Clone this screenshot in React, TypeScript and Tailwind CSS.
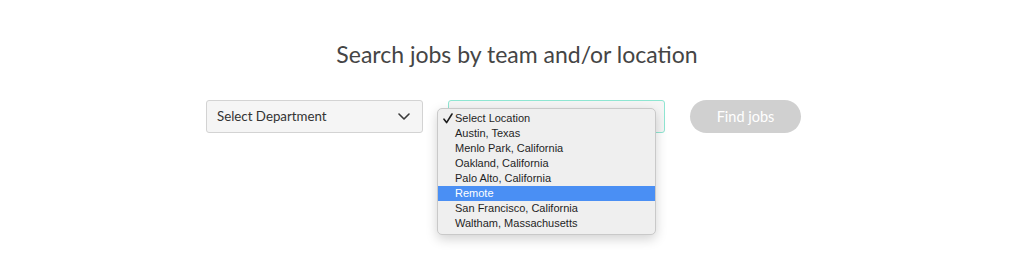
import { FC } from 'react';

const locations = [
    'Select Location',
    'Austin, Texas',
    'Menlo Park, California',
    'Oakland, California',
    'Palo Alto, California',
    'Remote',
    'San Francisco, California',
    'Waltham, Massachusetts',
];

const Chevron: FC = () => (
    <svg width="12" height="7" viewBox="0 0 12 7" fill="none" className="shrink-0">
        <polyline points="1,1 6,6 11,1" stroke="#3a3a3a" strokeWidth="1.6" strokeLinecap="round" strokeLinejoin="round" />
    </svg>
);

const Check: FC = () => (
    <svg width="10" height="11" viewBox="0 0 10 11" fill="none" className="absolute left-[5px] top-[2px]">
        <path d="M1 6.2 L3.6 9.6 L9 1" stroke="#1c1c1c" strokeWidth="1.6" strokeLinecap="round" strokeLinejoin="round" />
    </svg>
);

const LocationMenu: FC<{ highlighted: string }> = ({ highlighted }) => (
    <ul className="absolute left-[-11px] top-[8px] w-[219px] py-[2px] pb-[3px] rounded-[5px] border border-[#c9c9c9] bg-[#efefef] shadow-[0_4px_12px_rgba(0,0,0,0.18)] font-['Liberation_Sans',sans-serif] text-[11px] text-[#1f1f1f]">
        {locations.map((loc, i) => (
            <li
                key={loc}
                className={
                    loc === highlighted
                        ? 'relative h-[15px] leading-[15px] pl-[17px] bg-[#4a8ff4] text-white'
                        : 'relative h-[15px] leading-[15px] pl-[17px]'
                }
            >
                {i === 0 && <Check />}
                {loc}
            </li>
        ))}
    </ul>
);

export default function App() {
    return (
        <div className="w-[1024px] h-[253px] bg-white font-['Lato',sans-serif]">
            <h1 className="pt-[40px] pl-[10px] text-center text-[23px] leading-[28px] text-[#454545]">
                Search jobs by team and/or location
            </h1>

            <div className="mt-[32px] flex justify-center gap-[25px] pr-[17px]">
                <div className="w-[217px] h-[33px] flex items-center justify-between pl-[10px] pr-[12px] rounded-[3px] border border-[#d3d3d3] bg-[#f5f5f5] text-[13.3px] text-[#333]">
                    <span>Select Department</span>
                    <Chevron />
                </div>

                <div className="relative w-[217px] h-[33px]">
                    <div className="w-full h-full rounded-[3px] border border-[#8fe6d2] bg-[#f5f5f5]" />
                    <LocationMenu highlighted="Remote" />
                </div>

                <button className="w-[111px] h-[33px] rounded-full bg-[#d0d0d0] text-white text-[14.5px]">
                    Find jobs
                </button>
            </div>
        </div>
    );
}
